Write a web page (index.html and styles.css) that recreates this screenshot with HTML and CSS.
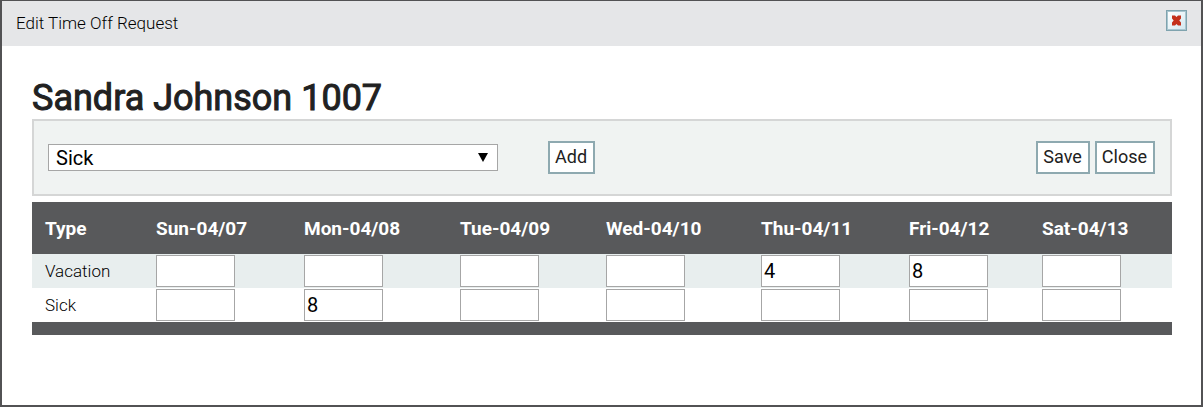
FILE: index.html
```html
<!DOCTYPE html>
<html lang="en">
<head>
<meta charset="utf-8">
<title>Edit Time Off Request</title>
<link rel="stylesheet" href="styles.css">
</head>
<body>
<div class="dialog" role="dialog" aria-labelledby="dialog-title">
  <header class="titlebar">
    <span class="title" id="dialog-title">Edit Time Off Request</span>
    <button class="dismiss" type="button" aria-label="Close dialog">
      <svg viewBox="0 0 21 21" width="21" height="21" aria-hidden="true">
        <defs><linearGradient id="face" x1="0" y1="0" x2="1" y2="1"><stop offset="0" stop-color="#fff"/><stop offset="1" stop-color="#d3e8f0"/></linearGradient></defs>
        <rect x=".5" y=".5" width="20" height="20" fill="#a9c6d0" stroke="#7fa3ae"/>
        <rect x="2" y="2" width="17" height="17" fill="url(#face)"/>
        <path d="M6 5.500h3l1.500 1.500 1.500-1.500h3v3l-1.700 2 1.700 2v3h-3l-1.500-1.500-1.500 1.500h-3v-3l1.700-2-1.700-2z" fill="#c4311c"/>
      </svg>
    </button>
  </header>
  <main class="content">
    <h1 class="employee">Sandra Johnson 1007</h1>
    <div class="toolbar">
      <select class="type-select" aria-label="Time off type"><option>Vacation</option><option selected>Sick</option></select>
      <button class="btn" type="button">Add</button>
      <div class="actions">
        <button class="btn" type="button">Save</button>
        <button class="btn" type="button">Close</button>
      </div>
    </div>
    <table class="hours">
      <colgroup><col class="c-type"><col class="c-sun"><col class="c-mon"><col class="c-tue"><col class="c-wed"><col class="c-thu"><col class="c-fri"><col class="c-sat"></colgroup>
      <thead>
        <tr><th>Type</th><th>Sun-04/07</th><th>Mon-04/08</th><th>Tue-04/09</th><th>Wed-04/10</th><th>Thu-04/11</th><th>Fri-04/12</th><th>Sat-04/13</th></tr>
      </thead>
      <tbody>
        <tr class="shaded">
          <td>Vacation</td>
          <td><input type="text" aria-label="Vacation Sun-04/07"></td>
          <td><input type="text" aria-label="Vacation Mon-04/08"></td>
          <td><input type="text" aria-label="Vacation Tue-04/09"></td>
          <td><input type="text" aria-label="Vacation Wed-04/10"></td>
          <td><input type="text" aria-label="Vacation Thu-04/11" value="4"></td>
          <td><input type="text" aria-label="Vacation Fri-04/12" value="8"></td>
          <td><input type="text" aria-label="Vacation Sat-04/13"></td>
        </tr>
        <tr>
          <td>Sick</td>
          <td><input type="text" aria-label="Sick Sun-04/07"></td>
          <td><input type="text" aria-label="Sick Mon-04/08" value="8"></td>
          <td><input type="text" aria-label="Sick Tue-04/09"></td>
          <td><input type="text" aria-label="Sick Wed-04/10"></td>
          <td><input type="text" aria-label="Sick Thu-04/11"></td>
          <td><input type="text" aria-label="Sick Fri-04/12"></td>
          <td><input type="text" aria-label="Sick Sat-04/13"></td>
        </tr>
      </tbody>
    </table>
  </main>
</div>
</body>
</html>
```
FILE: styles.css
```css
* { box-sizing: border-box; }
body {
  margin: 0;
  font-family: Roboto, "Liberation Sans", sans-serif;
  font-size: 17px;
  font-weight: 300;
  color: #212121;
  background: #fff;
}
.dialog {
  min-height: 100vh;
  border: 2px solid #525254;
  border-top-width: 1px;
}
.titlebar {
  display: flex;
  justify-content: space-between;
  align-items: flex-start;
  padding: 9px 14px 11px;
  color: #000;
  background: #e5e6e8;
}
.title {
  padding-top: 1px;
  line-height: 24px;
}
.dismiss {
  display: block;
  padding: 0;
  border: 0;
  background: none;
}
.dismiss svg { display: block; }
.content { padding: 32px 29px 32px 30px; }
.employee {
  margin: 0;
  font-size: 36px;
  line-height: 41px;
  font-weight: 400;
  -webkit-text-stroke: 1px #212121;
}
.toolbar {
  display: flex;
  align-items: flex-start;
  padding: 20px 15px 20px 14px;
  border: 2px solid #d5d6d6;
  background: #f0f3f2;
}
.type-select {
  width: 450px;
  height: 27px;
  margin: 3px 50px 0 0;
  padding: 1px 8px 0 7px;
  border: 1px solid #a6a6a6;
  border-radius: 0;
  appearance: none;
  font: 400 20px/25px Roboto, "Liberation Sans", sans-serif;
  color: #000;
  background: #fff url("data:image/svg+xml,%3Csvg xmlns='http://www.w3.org/2000/svg' width='10' height='9'%3E%3Cpath d='M0 0h10L5 9z'/%3E%3C/svg%3E") no-repeat right 9px center;
}
.btn {
  height: 33px;
  padding: 0 6px 2px 5px;
  border: 2px solid #8ea9b0;
  font: 400 18px/27px Roboto, "Liberation Sans", sans-serif;
  color: #212121;
  background: #fff;
}
.actions {
  display: flex;
  gap: 5px;
  margin-left: auto;
}
.hours {
  width: 100%;
  margin-top: 6px;
  table-layout: fixed;
  border-collapse: collapse;
  border-bottom: 13px solid #58595b;
  color: #000;
}
.c-type { width: 111px; }
.c-sun { width: 148px; }
.c-mon { width: 156px; }
.c-tue { width: 146px; }
.c-wed { width: 155px; }
.c-thu { width: 148px; }
.c-fri { width: 133px; }
.c-sat { width: 143px; }
.hours th {
  height: 52px;
  padding: 0 0 0 13px;
  font-size: 19px;
  font-weight: 700;
  text-align: left;
  color: #fff;
  background: #58595b;
}
.hours td { padding: 1px 0 1px 13px; }
.shaded { background: #e8eeee; }
.hours input {
  display: block;
  width: 79px;
  height: 32px;
  padding: 0 2px;
  border: 1px solid #a6a6a6;
  font: 400 20px Roboto, "Liberation Sans", sans-serif;
  color: #000;
  background: #fff;
}
```
